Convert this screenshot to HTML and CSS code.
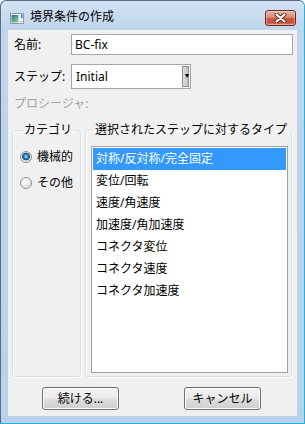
FILE: index.html
```html
<!DOCTYPE html>
<html lang="ja">
<head>
<meta charset="utf-8">
<title>境界条件の作成</title>
<link rel="stylesheet" href="styles.css">
</head>
<body>
<div class="window">
  <div class="titlebar">
    <svg class="app-icon" width="14" height="11" viewBox="0 0 14 11">
      <defs>
        <linearGradient id="ig" x1="0" y1="0" x2="1" y2="1">
          <stop offset="0" stop-color="#2f6f86"/>
          <stop offset="1" stop-color="#93d39c"/>
        </linearGradient>
      </defs>
      <rect x="0.5" y="0.5" width="13" height="10" fill="#f3f5f7" stroke="#8b98a6"/>
      <rect x="1.5" y="2" width="7" height="7.5" fill="url(#ig)"/>
      <rect x="11" y="1.5" width="1.5" height="3.5" fill="#2b6fd6"/>
      <rect x="9.5" y="8" width="3" height="1" fill="#b9c2cc"/>
    </svg>
    <span class="title">境界条件の作成</span>
    <span class="close">
      <svg width="13" height="10" viewBox="0 0 13 10">
        <path d="M2.5 1.5 L10.5 8.5 M10.5 1.5 L2.5 8.5" stroke="#5b2a22" stroke-width="4" stroke-linecap="round" fill="none"/>
        <path d="M2.5 1.5 L10.5 8.5 M10.5 1.5 L2.5 8.5" stroke="#ffffff" stroke-width="2.2" stroke-linecap="round" fill="none"/>
      </svg>
    </span>
  </div>
  <div class="client">
    <div class="field-row">
      <span class="label">名前:</span>
      <div class="textbox">BC-fix</div>
    </div>
    <div class="field-row step-row">
      <span class="label">ステップ:</span>
      <div class="combo">
        <span class="combo-text">Initial</span>
        <span class="combo-btn">
          <svg width="4" height="4" viewBox="0 0 4 4"><path d="M0 0 H4 L2 4 Z" fill="#000"/></svg>
        </span>
      </div>
    </div>
    <div class="disabled-label">プロシージャ:</div>
    <div class="groups">
      <fieldset class="group group-cat">
        <legend>カテゴリ</legend>
        <div class="radio-row"><span class="radio checked"></span><span>機械的</span></div>
        <div class="radio-row second"><span class="radio"></span><span>その他</span></div>
      </fieldset>
      <fieldset class="group group-types">
        <legend>選択されたステップに対するタイプ</legend>
        <ul class="listbox">
          <li class="selected">対称/反対称/完全固定</li>
          <li>変位/回転</li>
          <li>速度/角速度</li>
          <li>加速度/角加速度</li>
          <li>コネクタ変位</li>
          <li>コネクタ速度</li>
          <li>コネクタ加速度</li>
        </ul>
      </fieldset>
    </div>
    <div class="buttons">
      <button class="btn">続ける...</button>
      <button class="btn">キャンセル</button>
    </div>
  </div>
</div>
</body>
</html>
```
FILE: styles.css
```css
* { box-sizing: border-box; }
html, body { margin: 0; padding: 0; }
body {
  width: 305px;
  height: 424px;
  overflow: hidden;
  background: #ffffff;
  font-family: "Noto Sans", "Noto Sans CJK JP", sans-serif;
  font-size: 12px;
  line-height: 16px;
  color: #000;
}
.window {
  width: 305px;
  height: 424px;
  display: flex;
  flex-direction: column;
  border: 1px solid;
  border-color: #5d6c7e #22b2da #22b2da #5d6c7e;
  border-radius: 6px 6px 0 0;
  background: linear-gradient(#d2e2f3, #bfd5ec 29px, #b9d1ea);
  padding: 0 7px 7px;
}
.titlebar {
  height: 29px;
  display: flex;
  align-items: flex-start;
  flex: none;
}
.app-icon { margin: 12px 0 0 2px; flex: none; }
.title { margin: 8px 0 0 6px; color: #000; }
.close {
  margin: 9px 1px 0 auto;
  width: 31px;
  height: 16px;
  border: 1px solid #6a2a20;
  border-radius: 3px;
  background: linear-gradient(#eab0a2 0%, #dd8c7c 45%, #c9503a 55%, #c45a42 85%, #d9826a 100%);
  box-shadow: inset 0 0 0 1px rgba(255,255,255,0.35);
  display: flex;
  align-items: center;
  justify-content: center;
}
.client {
  flex: 1;
  background: #f0f0f0;
  display: flex;
  flex-direction: column;
  padding: 4px 0 6px;
}
.field-row {
  display: grid;
  grid-template-columns: 57px 1fr;
  align-items: center;
  padding: 0 4px 0 6px;
}
.step-row { margin-top: 9px; }
.textbox {
  height: 21px;
  border: 1px solid #a3a6ab;
  background: #fff;
  padding-left: 3px;
  line-height: 19px;
}
.combo {
  width: 120px;
  height: 25px;
  border: 1px solid #a3a6ab;
  background: #fff;
  display: flex;
  align-items: stretch;
}
.combo-text { flex: 1; padding-left: 4px; line-height: 23px; }
.combo-btn {
  width: 7px;
  margin: 1px 1px 1px 0;
  border: 1px solid #8c8c8c;
  background: linear-gradient(90deg, #dcdcdc, #c4c4c4);
  display: flex;
  justify-content: flex-end;
  align-items: flex-start;
  padding-top: 7px;
}
.combo-btn svg { margin-right: -1px; }
.disabled-label {
  margin-top: 7px;
  padding-left: 6px;
  color: #a3a3a3;
}
.groups {
  margin-top: 10px;
  display: flex;
  gap: 4px;
  padding: 0 5px 0 4px;
}
.group {
  margin: 0;
  border: 1px solid #d5dfe5;
  border-radius: 3px;
  box-shadow: inset 1px 1px 0 #fff, 1px 1px 0 #fff;
  min-width: 0;
}
.group legend {
  padding: 0 2px;
  margin-left: 2px;
  line-height: 16px;
  white-space: nowrap;
}
.group-cat {
  width: 69px;
  padding: 11px 2px 3px 7px;
}
.group-types {
  width: 207px;
  padding: 8px 3px 3px 5px;
}
.radio-row {
  display: flex;
  align-items: center;
  gap: 5px;
  height: 16px;
  white-space: nowrap;
}
.radio-row.second { margin-top: 10px; }
.radio {
  width: 12px;
  height: 12px;
  flex: none;
  border-radius: 50%;
  border: 1px solid #8d9095;
  background: radial-gradient(circle at 40% 35%, #ffffff, #e6e6e6 60%, #d2d2d2);
}
.radio.checked {
  background:
    radial-gradient(circle at 50% 45%, #a8e0ff 0, #3f9ee0 1.6px, #1b5b90 3px, #2b4f6e 3.6px, transparent 4.2px),
    radial-gradient(circle at 40% 35%, #ffffff, #e6e6e6 60%, #d2d2d2);
}
.listbox {
  list-style: none;
  margin: 0;
  padding: 1px;
  height: 227px;
  border: 1px solid #9ea2a8;
  background: #fff;
}
.listbox li {
  height: 22px;
  line-height: 22px;
  padding-left: 3px;
  white-space: nowrap;
}
.listbox li.selected {
  background: #3399ff;
  color: #fff;
}
.buttons {
  margin-top: 10px;
  display: flex;
  gap: 65px;
  padding-left: 34px;
}
.btn {
  width: 77px;
  height: 23px;
  margin: 0;
  padding: 0;
  font: inherit;
  color: #000;
  border: 1px solid #707070;
  border-radius: 3px;
  background: linear-gradient(#f2f2f2 0%, #ebebeb 48%, #dddddd 52%, #cfcfcf 100%);
  box-shadow: inset 0 0 0 1px #fbfbfb;
}
```
